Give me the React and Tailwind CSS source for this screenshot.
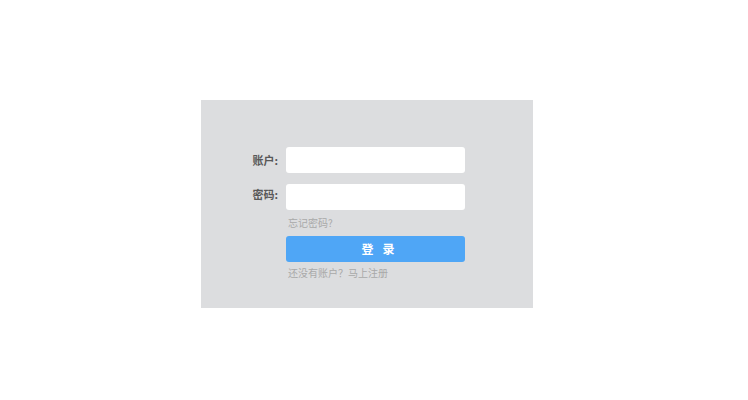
export default function App() {
  const font = { fontFamily: '"Noto Sans CJK SC", "Noto Sans", sans-serif' };
  return (
    <div className="w-[748px] h-[400px] bg-white overflow-hidden" style={font}>
      <div className="ml-[201px] mt-[100px] w-[332px] h-[208px] bg-[#dcdddf] pt-[47px]">
        <div className="flex items-center h-[26px]">
          <div className="w-[85px] pr-[8px] text-right text-[11px] leading-[14px] font-bold text-[#585858]">账户:</div>
          <div className="w-[179px] h-[26px] rounded-[3px] bg-white"></div>
        </div>
        <div className="flex items-center h-[26px] mt-[11px]">
          <div className="w-[85px] pr-[8px] text-right text-[11px] leading-[14px] font-bold text-[#585858] -mt-[6px]">密码:</div>
          <div className="w-[179px] h-[26px] rounded-[3px] bg-white"></div>
        </div>
        <div className="ml-[87px] mt-[6px] h-[14px] text-[10px] leading-[14px] text-[#a9a9a9]">忘记密码?</div>
        <div className="ml-[85px] mt-[6px] w-[179px] h-[26px] rounded-[3px] bg-[#4fa6f6] flex items-center justify-center gap-[9px] text-white text-[12px] font-bold pl-[5px]">
          <span>登</span>
          <span>录</span>
        </div>
        <div className="ml-[87px] mt-[4px] h-[14px] text-[10px] leading-[14px] text-[#a9a9a9]">还没有账户？马上注册</div>
      </div>
    </div>
  );
}
